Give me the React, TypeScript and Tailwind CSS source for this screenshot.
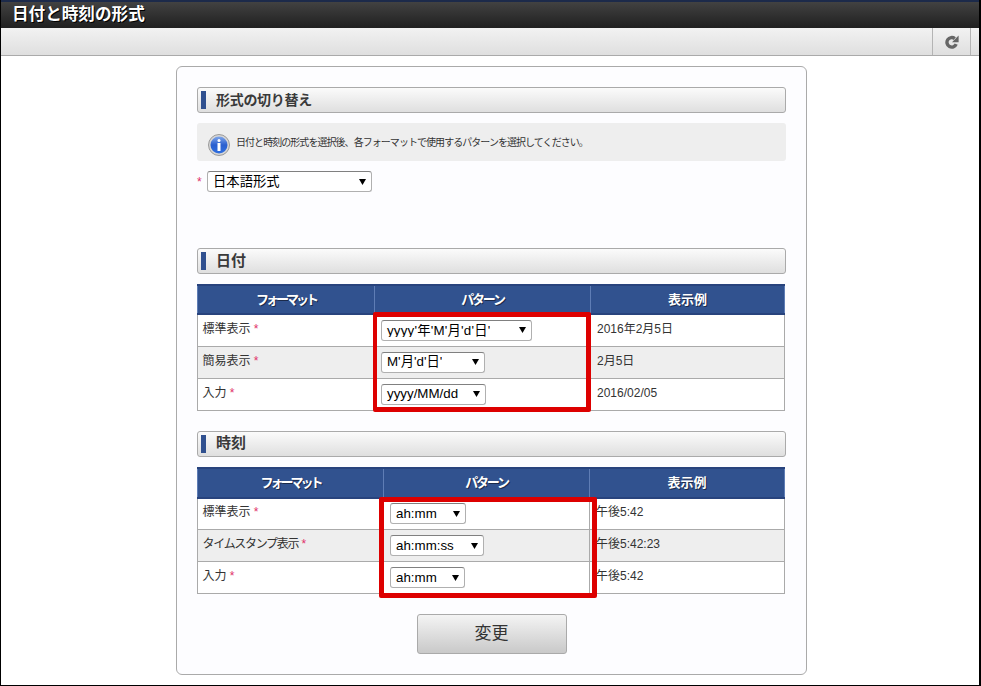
const font = { fontFamily: '"Liberation Sans", "Noto Sans CJK JP", sans-serif' };

function SectionHead({ title, indent, size }: { title: string; indent: string; size: string }) {
  return (
    <div className="flex h-[26px] items-center rounded-[3px] border border-[#aaaaaa] bg-gradient-to-b from-[#fbfbfb] to-[#dfdfdf] pl-[3px]">
      <span className="h-[18px] w-[5px] shrink-0 bg-[#30508f]" />
      <span className={`${indent} ${size} font-bold text-[#3a3a3a]`}>{title}</span>
    </div>
  );
}

function Sel({ text, w, track = "" }: { text: string; w: string; track?: string }) {
  return (
    <div className={`${w} flex h-[21px] items-center justify-between rounded-[3px] border border-[#b0b0b0] border-t-[#808080] bg-white text-[13.33px] leading-none text-black`}>
      <span className={`${track} truncate whitespace-nowrap pl-[5px]`}>{text}</span>
      <svg width="7" height="6" viewBox="0 0 7 6" className="mr-[5px] shrink-0">
        <path d="M0 0 H7 L3.5 6 Z" fill="#000000" />
      </svg>
    </div>
  );
}

type Row = { label: string; labelTrack?: string; sel: string; w: string; track?: string; ex: string };

const heads = [
  { t: "フォーマット", c: "tracking-[-3px]" },
  { t: "パターン", c: "tracking-[-2.2px]" },
  { t: "表示例", c: "" },
];

function FormatTable({ cols, rows, headH }: { cols: string[]; rows: Row[]; headH: string }) {
  return (
    <table className="w-[587px] table-fixed border-collapse text-[12px] text-[#333333]">
      <colgroup>
        <col className={cols[0]} />
        <col className={cols[1]} />
        <col className={cols[2]} />
      </colgroup>
      <thead>
        <tr className={`${headH} border-y-2 border-t-[#28437d] border-b-[#28437d] bg-[#31528f] text-white`}>
          {heads.map((h) => (
            <th key={h.t} className={`border-x border-[#5f7db5] text-[13px] font-bold [text-shadow:1px_1px_0_#1b2a4a] ${h.c}`}>
              {h.t}
            </th>
          ))}
        </tr>
      </thead>
      <tbody>
        {rows.map((r, i) => (
          <tr key={r.label} className={`h-[32px] border-b border-[#aaaaaa] ${i === 1 ? "bg-[#eeeeee]" : "bg-white"}`}>
            <td className="border-x border-[#aaaaaa] pb-[3px] pl-[4.5px] align-middle">
              <span className={r.labelTrack}>{r.label}</span> <span className="text-[#e0306a]">*</span>
            </td>
            <td className="border-x border-[#aaaaaa] pl-[6px] align-middle">
              <Sel text={r.sel} w={r.w} track={r.track} />
            </td>
            <td className="border-x border-[#aaaaaa] pb-[3px] pl-[6px] align-middle">{r.ex}</td>
          </tr>
        ))}
      </tbody>
    </table>
  );
}

export default function App() {
  return (
    <div style={font} className="relative flex h-[686px] w-[981px] flex-col overflow-hidden border-b border-l border-r-2 border-black bg-white">
      <div className="h-[2px] shrink-0 bg-[#1c2a4a]" />
      <div className="flex h-[26px] shrink-0 items-center bg-gradient-to-b from-[#424242] to-[#202020] pl-[11px] text-[16.6px] font-bold leading-none text-white [text-shadow:1px_1px_0_#000]">
        日付と時刻の形式
      </div>
      <div className="flex h-[28px] shrink-0 justify-end border-b border-[#aaaaaa] bg-gradient-to-b from-[#f2f2f2] to-[#dfdfdf] pr-[8px]">
        <div className="flex w-[39px] items-center justify-center border-x border-[#b4b4b4]">
          <svg width="14" height="14" viewBox="0 0 14 14">
            <path d="M11.2 9.2 A4.8 4.8 0 1 1 9.8 3.6" fill="none" stroke="#666666" strokeWidth="3.4" />
            <path d="M13.6 0.6 V7.2 H7 Z" fill="#666666" />
          </svg>
        </div>
      </div>

      <main className="ml-[175px] mt-[10px] flex h-[609px] w-[631px] flex-col rounded-[6px] border border-[#aaaaaa] bg-[#fdfdff] px-[20px] pt-[20px]">
        <SectionHead title="形式の切り替え" indent="ml-[10px] tracking-[-0.3px]" size="text-[14px]" />

        <div className="mt-[10px] flex h-[38px] items-center rounded-[3px] bg-[#eeeeee] pl-[10px] text-[10px] text-[#333333]">
          <svg width="24" height="24" viewBox="0 0 24 24" className="mt-[6px] shrink-0">
            <defs>
              <linearGradient id="infoBlue" x1="0" y1="0" x2="0" y2="1">
                <stop offset="0" stopColor="#7fa6ea" />
                <stop offset="0.5" stopColor="#2a5fcf" />
                <stop offset="1" stopColor="#2f6fe0" />
              </linearGradient>
            </defs>
            <circle cx="12" cy="12" r="10.5" fill="#d6d6d6" stroke="#9a9a9a" />
            <circle cx="12" cy="12" r="8.5" fill="url(#infoBlue)" />
            <circle cx="12" cy="7.5" r="1.5" fill="#ffffff" />
            <rect x="10.5" y="10" width="3" height="8" fill="#ffffff" />
          </svg>
          <span className="ml-[5px] whitespace-nowrap tracking-[-0.95px]">日付と時刻の形式を選択後、各フォーマットで使用するパターンを選択してください。</span>
        </div>

        <div className="mt-[10px] flex items-center text-[12px]">
          <span className="w-[10px] text-[#e0306a]">*</span>
          <Sel text="日本語形式" w="w-[165px]" />
        </div>

        <div className="mt-[56px]">
          <SectionHead title="日付" indent="ml-[10px]" size="text-[15px]" />
        </div>
        <div className="mt-[10px]">
          <FormatTable
            headH="h-[29px]"
            cols={["w-[177px]", "w-[216px]", "w-[194px]"]}
            rows={[
              { label: "標準表示", sel: "yyyy'年'M'月'd'日'", w: "w-[151px]", track: "tracking-[0.2px]", ex: "2016年2月5日" },
              { label: "簡易表示", sel: "M'月'd'日'", w: "w-[104px]", ex: "2月5日" },
              { label: "入力", sel: "yyyy/MM/dd", w: "w-[105px]", ex: "2016/02/05" },
            ]}
          />
        </div>

        <div className="mt-[20px]">
          <SectionHead title="時刻" indent="ml-[10px]" size="text-[15px]" />
        </div>
        <div className="mt-[10px]">
          <FormatTable
            headH="h-[30px]"
            cols={["w-[186px]", "w-[206px]", "w-[195px]"]}
            rows={[
              { label: "標準表示", sel: "ah:mm", w: "w-[76px]", ex: "午後5:42" },
              { label: "タイムスタンプ表示", labelTrack: "tracking-[-1.3px]", sel: "ah:mm:ss", w: "w-[94px]", ex: "午後5:42:23" },
              { label: "入力", sel: "ah:mm", w: "w-[75px]", ex: "午後5:42" },
            ]}
          />
        </div>

        <button className="mx-auto mt-[20px] h-[40px] w-[150px] rounded-[3px] border border-[#aaaaaa] bg-gradient-to-b from-[#f4f4f4] to-[#c9c9c9] text-[17px] text-[#333333]">
          変更
        </button>
      </main>

      <div className="absolute left-[372px] top-[312px] h-[100px] w-[218px] rounded-[2px] border-[5px] border-l-[4px] border-[#dd0000]" />
      <div className="absolute left-[378px] top-[497px] h-[101px] w-[218px] rounded-[2px] border-[5px] border-[#dd0000]" />
    </div>
  );
}
